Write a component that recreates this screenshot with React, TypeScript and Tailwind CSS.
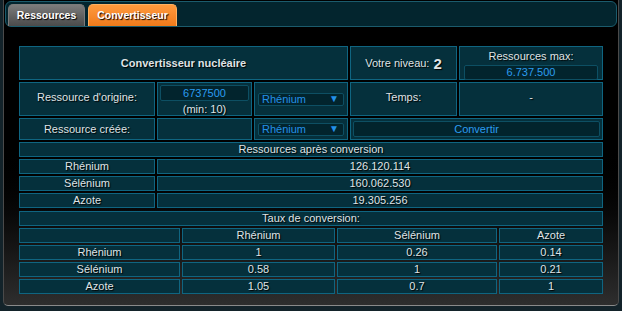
import { ReactNode } from 'react';

type CellProps = {
    className?: string
    children?: ReactNode
}

const shadow = "[text-shadow:1px_1px_1px_#000]"

function Cell({ className = "", children }: CellProps) {
    return (
        <div className={`border border-[#0f6581] bg-[#05303c] flex items-center justify-center text-[#dfe3e6] ${shadow} ${className}`}>
            {children}
        </div>
    )
}

function Select() {
    return (
        <div className="w-[86px] h-[13px] rounded-[2px] border border-[#0d4f63] bg-[#02242d] flex items-center justify-between pl-[3px] pr-[4px] text-[#2391e8] [text-shadow:none]">
            <span className="leading-none">Rhénium</span>
            <span className="text-[10px] leading-none">▼</span>
        </div>
    )
}

const rates = [
    { name: "Rhénium", values: ["1", "0.26", "0.14"], bg: "bg-[#052d39]" },
    { name: "Sélénium", values: ["0.58", "1", "0.21"], bg: "bg-[#0b3a46]" },
    { name: "Azote", values: ["1.05", "0.7", "1"], bg: "bg-[#0c3b47]" },
]

const after = [
    { name: "Rhénium", value: "126.120.114" },
    { name: "Sélénium", value: "160.062.530" },
    { name: "Azote", value: "19.305.256" },
]

export default function App() {
    return (
        <div className="w-[622px] h-[311px] bg-[#13232a] overflow-hidden text-[11px] font-['Liberation_Sans',Arial,sans-serif]">
            <div className="ml-[3px] w-[616px] h-[306px] rounded-b-[5px] border-x border-b border-x-[#4a4a4a] border-b-[#8a8a8a] bg-linear-to-b from-black from-45% to-[#2e2e2e]">
                <div className="mx-[1px] pt-[1px]">
                    <div className="h-[26px] rounded-[6px] border border-[#1b5b6c] bg-[#03252e] flex items-end gap-[3px] pl-[2px]">
                        <div className={`h-[22px] w-[77px] rounded-t-[5px] border border-b-0 border-[#7a7a7a] bg-linear-to-b from-[#7c7c7c] to-[#4b4b4b] flex items-center justify-center font-bold text-[10.5px] text-white ${shadow}`}>
                            Ressources
                        </div>
                        <div className={`h-[22px] w-[89px] rounded-t-[5px] border border-b-0 border-[#ffb060] bg-linear-to-b from-[#ff9a3c] to-[#ef7a1a] flex items-center justify-center font-bold text-[10.5px] text-white ${shadow}`}>
                            Convertisseur
                        </div>
                    </div>
                </div>

                <div className="pl-[15px] pt-[19px]">
                    <div className="w-[584px] grid grid-cols-[136px_95px_94px_107px_144px] grid-rows-[34px_34px_22px_15px_15px_15px_15px] gap-[2px]">
                        <Cell className="col-span-3 font-bold">Convertisseur nucléaire</Cell>
                        <Cell className="gap-[4px]">
                            <span>Votre niveau:</span>
                            <span className="font-bold text-[15px] leading-none">2</span>
                        </Cell>
                        <Cell className="flex-col justify-start pt-[3px] gap-[2px]">
                            <span className="leading-[13px]">Ressources max:</span>
                            <div className="w-[134px] h-[15px] rounded-[2px] border border-[#0d4f63] bg-[#02242d] flex items-center justify-center text-[#2b9cf0] [text-shadow:none]">
                                6.737.500
                            </div>
                        </Cell>

                        <Cell className="pb-[3px]">Ressource d'origine:</Cell>
                        <Cell className="flex-col justify-start pt-[2px] gap-[1px]">
                            <div className="w-[89px] h-[16px] rounded-[2px] border border-[#0d4f63] bg-[#02242d] flex items-center justify-center text-[#2b9cf0] [text-shadow:none]">
                                6737500
                            </div>
                            <span className="leading-[14px]">(min: 10)</span>
                        </Cell>
                        <Cell><Select /></Cell>
                        <Cell className="pb-[3px]">Temps:</Cell>
                        <Cell className="pb-[4px]">-</Cell>

                        <Cell>Ressource créée:</Cell>
                        <Cell />
                        <Cell><Select /></Cell>
                        <Cell className="col-span-2 px-[2px]">
                            <div className="w-full h-[16px] rounded-[2px] border border-[#0d4f63] bg-[#02242d] flex items-center justify-center text-[#2b9cf0] [text-shadow:none]">
                                Convertir
                            </div>
                        </Cell>

                        <Cell className="col-span-5">Ressources après conversion</Cell>
                        {after.map((row) => (
                            <div key={row.name} className="contents">
                                <Cell>{row.name}</Cell>
                                <Cell className="col-span-4">{row.value}</Cell>
                            </div>
                        ))}
                    </div>

                    <div className="mt-[3px] w-[584px] grid grid-cols-[161px_153px_160px_104px] grid-rows-[15px_15px_15px_15px_15px] gap-[2px]">
                        <Cell className="col-span-4">Taux de conversion:</Cell>
                        <Cell className="bg-[#062f3b]" />
                        <Cell className="bg-[#062f3b]">Rhénium</Cell>
                        <Cell className="bg-[#062f3b]">Sélénium</Cell>
                        <Cell className="bg-[#062f3b]">Azote</Cell>
                        {rates.map((row) => (
                            <div key={row.name} className="contents">
                                <Cell className={row.bg}>{row.name}</Cell>
                                {row.values.map((v, i) => (
                                    <Cell key={i} className={row.bg}>{v}</Cell>
                                ))}
                            </div>
                        ))}
                    </div>
                </div>
            </div>
        </div>
    )
}
